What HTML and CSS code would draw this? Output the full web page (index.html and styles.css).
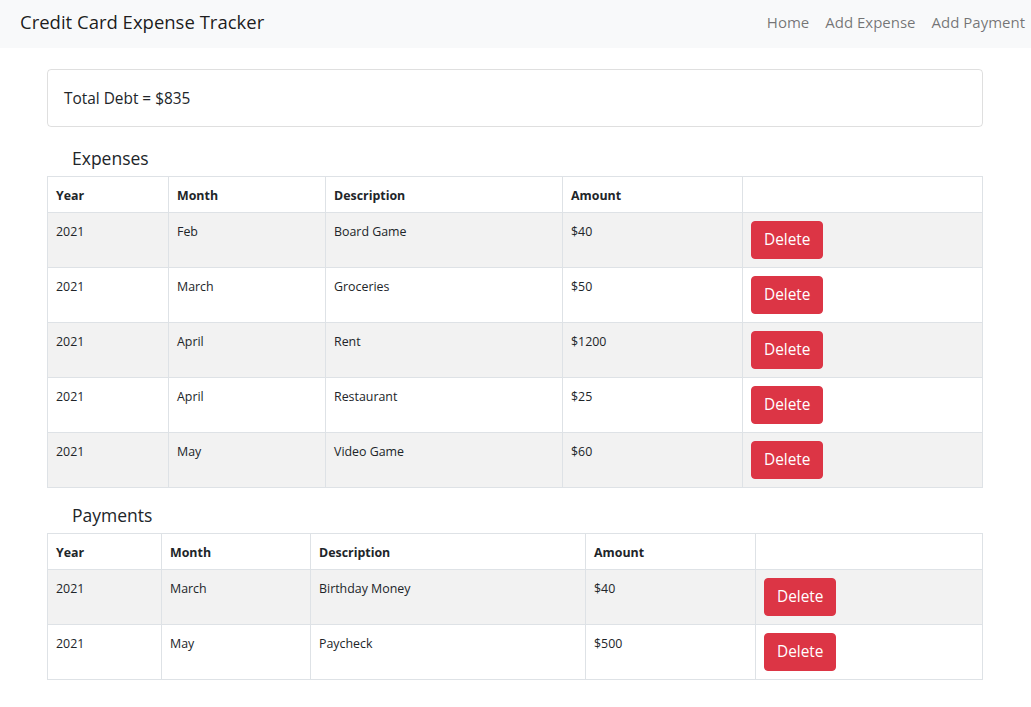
FILE: index.html
```html
<!DOCTYPE html>
<html lang="en">
<head>
<meta charset="utf-8">
<title>Credit Card Expense Tracker</title>
<link rel="stylesheet" href="styles.css">
</head>
<body>
<nav class="navbar">
  <a class="brand" href="#">Credit Card Expense Tracker</a>
  <div class="nav-links">
    <a class="nav-link" href="#">Home</a>
    <a class="nav-link" href="#">Add Expense</a>
    <a class="nav-link" href="#">Add Payment</a>
  </div>
</nav>
<main class="container">
  <div class="card">
    <div class="card-body">Total Debt = $835</div>
  </div>

  <h5 class="section-title first">Expenses</h5>
  <table class="table expenses">
    <thead>
      <tr><th>Year</th><th>Month</th><th>Description</th><th>Amount</th><th></th></tr>
    </thead>
    <tbody>
      <tr><td>2021</td><td>Feb</td><td>Board Game</td><td>$40</td><td><button class="btn-danger">Delete</button></td></tr>
      <tr><td>2021</td><td>March</td><td>Groceries</td><td>$50</td><td><button class="btn-danger">Delete</button></td></tr>
      <tr><td>2021</td><td>April</td><td>Rent</td><td>$1200</td><td><button class="btn-danger">Delete</button></td></tr>
      <tr><td>2021</td><td>April</td><td>Restaurant</td><td>$25</td><td><button class="btn-danger">Delete</button></td></tr>
      <tr><td>2021</td><td>May</td><td>Video Game</td><td>$60</td><td><button class="btn-danger">Delete</button></td></tr>
    </tbody>
  </table>

  <h5 class="section-title">Payments</h5>
  <table class="table payments">
    <thead>
      <tr><th>Year</th><th>Month</th><th>Description</th><th>Amount</th><th></th></tr>
    </thead>
    <tbody>
      <tr><td>2021</td><td>March</td><td>Birthday Money</td><td>$40</td><td><button class="btn-danger">Delete</button></td></tr>
      <tr><td>2021</td><td>May</td><td>Paycheck</td><td>$500</td><td><button class="btn-danger">Delete</button></td></tr>
    </tbody>
  </table>
</main>
</body>
</html>
```

FILE: styles.css
```css
* { box-sizing: border-box; }

body {
  margin: 0;
  font-family: "Segoe UI", "Open Sans", "Noto Sans", sans-serif;
  font-size: 15.4px;
  line-height: 1.5;
  color: #212529;
  background: #fff;
}

.navbar {
  height: 48px;
  background: #f8f9fa;
  display: flex;
  align-items: center;
  justify-content: space-between;
  padding: 0 0 4px 20px;
}

.brand {
  font-size: 18.5px;
  color: rgba(0, 0, 0, 0.9);
  text-decoration: none;
  line-height: 30px;
}

.nav-links {
  display: flex;
  margin-right: -2px;
}

.nav-link {
  color: rgba(0, 0, 0, 0.55);
  text-decoration: none;
  padding: 8px 8px;
  font-size: 15px;
}

.container {
  width: 936px;
  margin: 21px 0 0 47px;
}

.card {
  border: 1px solid rgba(0, 0, 0, 0.125);
  border-radius: 4px;
}

.card-body {
  padding: 17px 16px 15px;
  line-height: 24px;
}

.section-title {
  margin: 15px 0 6px 25px;
  font-size: 17.5px;
  font-weight: 500;
  line-height: 24px;
}

.section-title.first {
  margin-top: 19px;
}

.table {
  width: 100%;
  border-collapse: collapse;
  font-size: 12.4px;
  line-height: 19px;
  table-layout: fixed;
}

.table th,
.table td {
  border: 1px solid #dee2e6;
  padding: 8px 8px;
  text-align: left;
  vertical-align: top;
}

.table td {
  padding-top: 9px;
}

.table th {
  font-weight: 700;
  padding-top: 9px;
  padding-bottom: 7px;
}

.table tbody tr:nth-child(odd) td {
  background: #f2f2f2;
}

.table td:last-child {
  padding-top: 8px;
}

.expenses th:nth-child(1) { width: 121px; }
.expenses th:nth-child(2) { width: 157px; }
.expenses th:nth-child(3) { width: 237px; }
.expenses th:nth-child(4) { width: 180px; }

.payments th:nth-child(1) { width: 114px; }
.payments th:nth-child(2) { width: 149px; }
.payments th:nth-child(3) { width: 275px; }
.payments th:nth-child(4) { width: 170px; }

.btn-danger {
  display: inline-block;
  font-family: inherit;
  font-size: 15.4px;
  line-height: 24px;
  padding: 6px 12px;
  color: #fff;
  background: #dc3545;
  border: 1px solid #dc3545;
  border-radius: 4px;
  width: 72px;
  height: 38px;
  cursor: pointer;
}
```
